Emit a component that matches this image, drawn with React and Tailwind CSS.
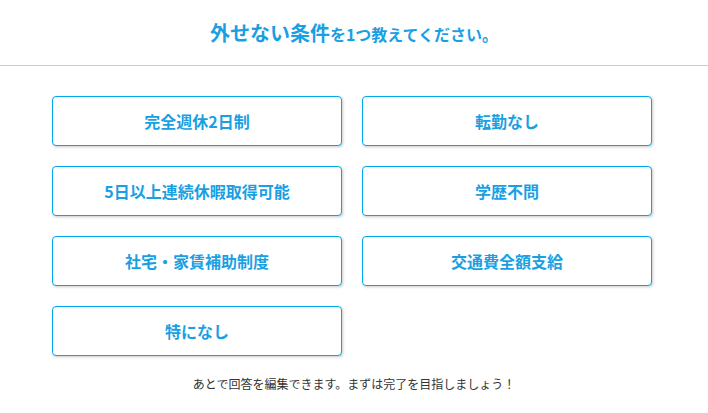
export default function App() {
  const items = [
    "完全週休2日制",
    "転勤なし",
    "5日以上連続休暇取得可能",
    "学歴不問",
    "社宅・家賃補助制度",
    "交通費全額支給",
    "特になし",
  ];
  return (
    <div className="w-[708px] h-[413px] bg-white" style={{ fontFamily: '"Noto Sans CJK JP", "Noto Sans", sans-serif' }}>
      <div className="h-[66px] border-b border-[#cccccc] flex items-center justify-center pb-[0px]">
        <h1 className="font-bold text-[#1a9fe3] leading-none">
          <span className="text-[20px]">外せない条件</span>
          <span className="text-[16px]">を1つ教えてください。</span>
        </h1>
      </div>
      <div className="ml-[52px] w-[600px] mt-[30px] grid grid-cols-2 gap-x-[20px] gap-y-[20px]">
        {items.map((t) => (
          <button
            key={t}
            className="h-[50px] bg-white border border-[#00a9eb] rounded-[4px] shadow-[1px_1px_3px_rgba(0,0,0,0.22)] flex items-center justify-center text-[16px] font-bold text-[#1a9fe3]"
          >
            {t}
          </button>
        ))}
      </div>
      <p className="mt-[19px] text-center text-[12px] leading-[18px] text-[#333333]">
        あとで回答を編集できます。まずは完了を目指しましょう！
      </p>
    </div>
  );
}
